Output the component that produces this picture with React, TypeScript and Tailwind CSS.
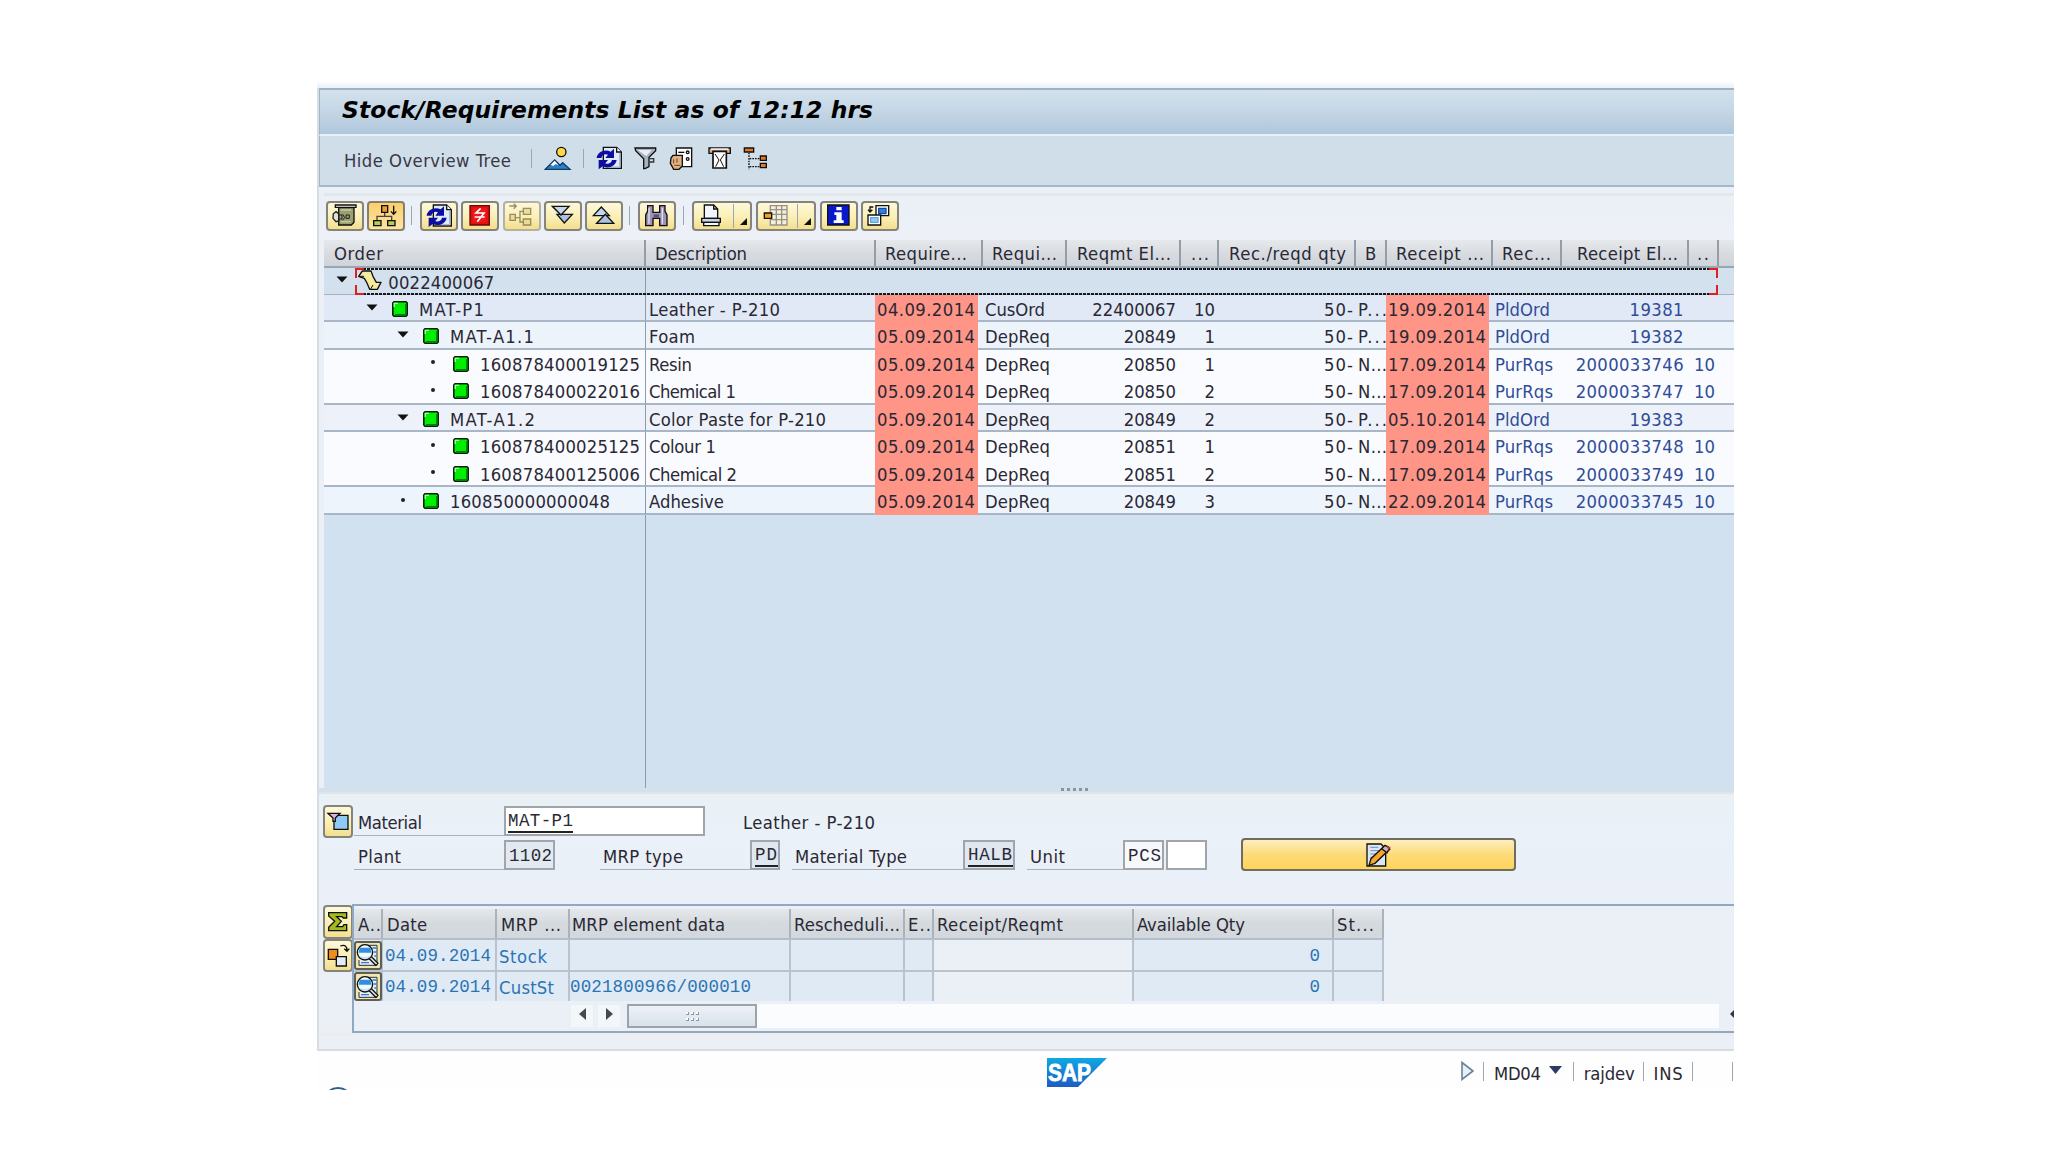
import { useLayoutEffect, useRef, type ReactNode } from "react";

/* Text run that spreads its letters to a given width. */
function T({ w, className = "", children }: { w?: number; className?: string; children: string }) {
  const ref = useRef<HTMLSpanElement>(null);
  useLayoutEffect(() => {
    const el = ref.current;
    if (!el || !w || children.length < 2) return;
    el.style.letterSpacing = "0px";
    const natural = el.getBoundingClientRect().width;
    el.style.letterSpacing = `${(w + 2 - natural) / (children.length - 1)}px`;
  }, [w, children]);
  return (
    <span ref={ref} className={`inline-block shrink-0 whitespace-pre ${className}`}>
      {children}
    </span>
  );
}

function Icon({ box, className = "", children }: { box: [number, number, number, number]; className?: string; children: ReactNode }) {
  return (
    <svg
      width={box[2] / 3}
      height={box[3] / 3}
      viewBox={box.join(" ")}
      className={`block shrink-0 ${className}`}
      fill="none"
      stroke="#101010"
      strokeWidth="4"
    >
      {children}
    </svg>
  );
}

const SyncArt = () => (
  <>
    <path d="M20 4H60L74 18V67H20Z" fill="#dfeafa" />
    <path d="M60 4V18H74" fill="#fff" />
    <path d="M69 22V63H26" stroke="#9fb0c8" strokeWidth="3" />
    <g stroke="none" fill="#0d0da0">
      <path d="M0 36C2 18 24 8 42 17L52 8V36H26L34 26C26 22 16 26 14 36Z" />
      <path d="M60 42C58 60 34 70 18 61L6 70V42H34L26 52C34 56 44 52 46 42Z" />
    </g>
  </>
);

const btnBase =
  "flex shrink-0 items-center justify-center rounded-[4px] border-2 bg-gradient-to-b from-[#fdf8da] via-[#fbf0b8] to-[#f3df8c]";
const btn = `${btnBase} h-[30px] w-[38px] border-[#85847c]`;
const wideBtn = `${btnBase} h-[30px] w-[60px] border-[#85847c]`;

const Sep = ({ className = "" }: { className?: string }) => (
  <div className={`w-[1px] shrink-0 bg-[#9aa8b5] ${className}`} />
);

const DownTri = () => (
  <svg width="12" height="7" viewBox="0 0 12 7" className="block shrink-0">
    <path d="M.5 .5H11.500L6 6.500Z" fill="#111" />
  </svg>
);

const Dropdown = () => (
  <svg width="7" height="7" viewBox="0 0 7 7" className="mt-2.5 block">
    <path d="M7 0V7H0Z" fill="#111" />
  </svg>
);

const GreenBox = () => (
  <svg width="16" height="16" viewBox="0 0 16 16" className="block shrink-0">
    <path d="M2 .8H14L15.2 2V14L14 15.200H2L.8 14V2Z" fill="#00ee00" stroke="#082008" strokeWidth="1.6" />
    <path d="M2.300 6V2.400H6" stroke="#a8ffa8" strokeWidth="1.4" fill="none" />
    <path d="M3 13.800H13.800V3" stroke="#067a10" strokeWidth="1.4" fill="none" />
  </svg>
);

const cols =
  "grid grid-cols-[322px_230px_107px_84px_114px_38px_137px_31px_106px_69px_127px_30px_15px]";

type Row = {
  id: string; w: number; level: number; leaf: boolean; bg: string; line: boolean; h: string;
  desc: string; dw: number; d1: string; type: string; num: string; item: string; b: string; d2: string; rec: string; el: string; ri: string;
};

const rows: Row[] = [
  { id: "MAT-P1", w: 63, level: 1, leaf: false, bg: "bg-[#e1e9f6]", line: true, h: "h-[27px]", desc: "Leather - P-210", dw: 129, d1: "04.09.2014", type: "CusOrd", num: "22400067", item: "10", b: "P...", d2: "19.09.2014", rec: "PldOrd", el: "19381", ri: "" },
  { id: "MAT-A1.1", w: 82, level: 2, leaf: false, bg: "bg-[#edf3fb]", line: true, h: "h-[28px]", desc: "Foam", dw: 44, d1: "05.09.2014", type: "DepReq", num: "20849", item: "1", b: "P...", d2: "19.09.2014", rec: "PldOrd", el: "19382", ri: "" },
  { id: "160878400019125", w: 158, level: 3, leaf: true, bg: "bg-[#f9fbfe]", line: false, h: "h-[27px]", desc: "Resin", dw: 41, d1: "05.09.2014", type: "DepReq", num: "20850", item: "1", b: "N...", d2: "17.09.2014", rec: "PurRqs", el: "2000033746", ri: "10" },
  { id: "160878400022016", w: 158, level: 3, leaf: true, bg: "bg-[#f9fbfe]", line: true, h: "h-[28px]", desc: "Chemical 1", dw: 85, d1: "05.09.2014", type: "DepReq", num: "20850", item: "2", b: "N...", d2: "17.09.2014", rec: "PurRqs", el: "2000033747", ri: "10" },
  { id: "MAT-A1.2", w: 83, level: 2, leaf: false, bg: "bg-[#edf2fa]", line: true, h: "h-[27px]", desc: "Color Paste for P-210", dw: 175, d1: "05.09.2014", type: "DepReq", num: "20849", item: "2", b: "P...", d2: "05.10.2014", rec: "PldOrd", el: "19383", ri: "" },
  { id: "160878400025125", w: 158, level: 3, leaf: true, bg: "bg-[#f9fbfe]", line: false, h: "h-[28px]", desc: "Colour 1", dw: 65, d1: "05.09.2014", type: "DepReq", num: "20851", item: "1", b: "N...", d2: "17.09.2014", rec: "PurRqs", el: "2000033748", ri: "10" },
  { id: "160878400125006", w: 158, level: 3, leaf: true, bg: "bg-[#f9fbfe]", line: true, h: "h-[27px]", desc: "Chemical 2", dw: 86, d1: "05.09.2014", type: "DepReq", num: "20851", item: "2", b: "N...", d2: "17.09.2014", rec: "PurRqs", el: "2000033749", ri: "10" },
  { id: "160850000000048", w: 158, level: 2, leaf: true, bg: "bg-[#eef4fc]", line: true, h: "h-[28px]", desc: "Adhesive", dw: 73, d1: "05.09.2014", type: "DepReq", num: "20849", item: "3", b: "N...", d2: "22.09.2014", rec: "PurRqs", el: "2000033745", ri: "10" },
];

const indent = ["", "pl-[42px]", "pl-[73px]", "pl-[103px]"];

const headers: [string, number, string][] = [
  ["Order", 47, "pl-[10px]"],
  ["Description", 90, "pl-[9px]"],
  ["Require...", 80, "pl-[9px]"],
  ["Requi...", 63, "pl-[9px]"],
  ["Reqmt El...", 92, "pl-[10px]"],
  ["...", 16, "pl-[10px]"],
  ["Rec./reqd qty", 115, "pl-[10px]"],
  ["B", 0, "pl-[9px]"],
  ["Receipt ...", 86, "pl-[9px]"],
  ["Rec...", 47, "pl-[9px]"],
  ["Receipt El...", 99, "pl-[15px]"],
  ["..", 10, "pl-[8px]"],
  ["", 0, ""],
];

function DateCell({ line, children }: { line: string; children: string }) {
  return (
    <div className="flex">
      <div className="-ml-px flex w-[103px] items-center bg-[#ff9587] pl-[2px] pt-[3px]"><T w={96}>{children}</T></div>
      <div className={`flex-1 ${line}`} />
    </div>
  );
}

function TreeRow({ r }: { r: Row }) {
  const line = r.line ? "border-b-2 border-[#a9b6c5]" : "";
  const cell = `flex items-center pt-[5px] ${r.line ? line : "pb-[2px]"}`;
  return (
    <div className={`${cols} ${r.h} ${r.bg}`}>
      <div className={`${cell} border-r border-r-[#8c9cae] ${indent[r.level]}`}>
        <div className="-mt-1.5 flex w-3 shrink-0 justify-center">
          {r.leaf ? <div className="size-[4px] rounded-full bg-[#222]" /> : <DownTri />}
        </div>
        <div className="-mt-[3px] ml-3.5"><GreenBox /></div>
        <T w={r.w} className="ml-[11px]">{r.id}</T>
      </div>
      <div className={`${cell} pl-[3px]`}><T w={r.dw}>{r.desc}</T></div>
      <DateCell line={line}>{r.d1}</DateCell>
      <div className={`${cell} pl-[2px]`}><T w={r.type === "CusOrd" ? 58 : 63}>{r.type}</T></div>
      <div className={`${cell} justify-end pr-[5px]`}><T>{r.num}</T></div>
      <div className={`${cell} justify-end pr-[4px]`}><T>{r.item}</T></div>
      <div className={`${cell} justify-end pr-[2px]`}><T w={27}>50-</T></div>
      <div className={`${cell} pl-[2px]`}><T w={27}>{r.b}</T></div>
      <DateCell line={line}>{r.d2}</DateCell>
      <div className={`${cell} pl-[2px] text-[#304c98]`}><T w={r.rec === "PldOrd" ? 53 : 56}>{r.rec}</T></div>
      <div className={`${cell} justify-end pr-[5px] text-[#304c98]`}><T w={r.el.length > 5 ? 106 : 52}>{r.el}</T></div>
      <div className={`${cell} pl-[5px] text-[#304c98]`}><T>{r.ri}</T></div>
      <div className={cell} />
    </div>
  );
}

function Field({ label, w, className }: { label: string; w: number; className: string }) {
  return (
    <div className={`flex h-[30px] shrink-0 items-center border-b border-[#a9b0b8] pt-[5px] ${className}`}>
      <T w={w}>{label}</T>
    </div>
  );
}

const input = "flex h-[30px] shrink-0 items-center border-2 border-[#a0a5ac] pt-[4px] font-['Liberation_Mono',monospace] text-[17.5px]";

const gridCols = "grid grid-cols-[29px_114px_73px_221px_114px_29px_200px_200px_50px]";

const Magnifier = () => (
  <div className="flex h-[29px] w-[28px] items-center justify-center rounded-[3px] border-2 border-[#5e5e58] bg-[#efe6b0]">
    <Icon box={[138, 518, 74, 78]}>
      <path d="M160 528H204V588H150V572" fill="#e8edf2" stroke="#2c3038" strokeWidth="3" />
      <path d="M190 536H202M194 548H202M196 560H202M156 580H180" stroke="#2b7fd0" />
      <circle cx="168" cy="549" r="23" fill="#f4f9ff" />
      <path d="M152 535H184L188 550H149Z" fill="#2f8fe0" stroke="none" />
      <path d="M152 562C160 568 174 568 182 562" stroke="#9fc8ec" strokeWidth="3" />
      <path d="M184 565L205 586" strokeWidth="13" />
      <path d="M185 566L203 584" stroke="#e2e8ec" strokeWidth="5" />
    </Icon>
  </div>
);

const bottomHeaders: [string, number, string][] = [
  ["A..", 21, "pl-[4px]"],
  ["Date", 38, "pl-[4px]"],
  ["MRP ...", 58, "pl-[4px]"],
  ["MRP element data", 151, "pl-[2px]"],
  ["Rescheduli...", 104, "pl-[3px]"],
  ["E..", 21, "pl-[3px]"],
  ["Receipt/Reqmt", 124, "pl-[3px]"],
  ["Available Qty", 106, "pl-[3px]"],
  ["St...", 35, "pl-[3px]"],
];

function StockRow({ type, w, data, h }: { type: string; w: number; data: string; h: string }) {
  const c = "flex items-center border-r-2 border-[#b9c3cd] bg-[#e0eaf4]";
  const mono = "pt-[3px] font-['Liberation_Mono',monospace] text-[17.5px]";
  return (
    <div className={`${gridCols} ${h} border-[#b9c3cd] text-[#2b74b4]`}>
      <div className={`${c} justify-center`}><Magnifier /></div>
      <div className={`${c} pl-[2px] ${mono}`}><T w={104}>04.09.2014</T></div>
      <div className={`${c} pl-[2px] pt-[4px]`}><T w={w}>{type}</T></div>
      <div className={`${c} ${mono}`}><T w={179}>{data}</T></div>
      <div className={c} />
      <div className={c} />
      <div className="flex items-center border-r-2 border-[#b9c3cd] bg-[#ebf0f7]" />
      <div className={`${c} justify-end pr-[12px] ${mono}`}><T>0</T></div>
      <div className={c} />
    </div>
  );
}

const dash =
  "h-[2px] bg-[repeating-linear-gradient(90deg,#15181c_0_3px,transparent_3px_4px)]";

export default function App() {
  return (
    <div className="h-[1170px] w-[2048px] overflow-hidden bg-white pl-[317px] pt-[81px] font-['DejaVu_Sans_Condensed','DejaVu_Sans',sans-serif] text-[18.3px] leading-none text-[#2a2834] [font-stretch:condensed]">
      <div className="w-[1417px] overflow-hidden">
        <div className="h-[7px] bg-gradient-to-b from-white to-[#e9f0f6]" />
        <div className="h-[963px] border-b-2 border-l-2 border-[#d8dde2] bg-[#ebf0f7]">
          {/* title bar */}
          <div className="flex h-[48px] items-center border-b-2 border-l border-t-2 border-b-[#e6f1f9] border-l-[#9fb6ca] border-t-[#9db3c6] bg-gradient-to-b from-[#d2e1ec] via-[#c4d6e5] to-[#afc7db] pl-[22px]">
            <T w={529} className="-mt-[3px] font-['DejaVu_Sans',sans-serif] text-[23.4px] font-bold italic text-black [font-stretch:normal]">
              Stock/Requirements List as of 12:12 hrs
            </T>
          </div>
          {/* application toolbar */}
          <div className="flex h-[51px] items-start border-b-2 border-l border-[#a3b7cb] bg-[#d0deea] pt-[10px]">
            <T w={165} className="ml-[24px] mt-[6px] text-[#3a3744]">Hide Overview Tree</T>
            <Sep className="ml-[20px] mt-[3px] h-[19px]" />
            <Icon box={[702, 198, 82, 76]} className="ml-[12px]">
              <circle cx="754" cy="216" r="14" fill="#ffd84a" />
              <path d="M706 268L734 240L750 256L758 248L780 268Z" fill="#2f80c8" stroke="#123a66" />
              <path d="M722 254L734 242L746 256L736 252L730 258Z" fill="#fff" stroke="none" />
            </Icon>
            <Sep className="ml-[11px] mt-[3px] h-[19px]" />
            <Icon box={[-2, 0, 82, 76]} className="ml-[12px]"><SyncArt /></Icon>
            <Icon box={[970, 198, 78, 76]} className="ml-[10px]">
              <path d="M976 204H1038V212L1018 232V260L1006 266H1002V236L978 212Z" fill="#a8b2be" />
              <path d="M984 210H1026L1010 228Z" fill="#e8eef4" stroke="none" />
              <path d="M1020 236H1032V246H1020" stroke="#333" />
            </Icon>
            <Icon box={[1078, 198, 76, 76]} className="ml-[10px]">
              <path d="M1100 204H1146V260H1100Z" fill="#fff" />
              <circle cx="1134" cy="217" r="4" /><circle cx="1134" cy="237" r="4" />
              <path d="M1106 217H1124" />
              <path d="M1084 234L1090 226H1118V258L1108 268H1092L1082 250Z" fill="#e0b080" />
              <path d="M1092 238V250M1102 236V248M1094 256H1112" stroke="#6b4320" strokeWidth="3" />
            </Icon>
            <Icon box={[1192, 198, 78, 76]} className="ml-[13px]">
              <path d="M1198 204H1262V220H1198Z" fill="#d8b090" />
              <path d="M1204 207H1256" stroke="#fff" />
              <path d="M1210 214H1250V264H1210Z" fill="#fff" strokeWidth="5" />
              <path d="M1216 222L1228 240L1218 260M1244 222L1232 240L1242 260" strokeWidth="3" />
            </Icon>
            <Icon box={[1298, 198, 76, 76]} className="ml-[10px]">
              <path d="M1302 204H1330V216H1302Z" fill="#e8781c" />
              <path d="M1316 218V268" strokeDasharray="5 3" />
              <path d="M1318 236H1348M1318 260H1348" strokeDasharray="5 3" />
              <path d="M1350 228H1368V241H1350ZM1350 250H1368V263H1350Z" fill="#e8781c" />
            </Icon>
          </div>
          {/* overview tree toolbar */}
          <div className="h-[53px] bg-gradient-to-b from-[#eaf0f6] to-[#edf1f7] pl-[5px] pt-[6px]">
            <div className="h-[3px] bg-[#e2e7ec]" />
            <div className="flex pl-[2px] pt-[5px]">
              <div className={btn}>
                <Icon box={[63, 368, 82, 76]}>
                  <path d="M86 382H132V426L124 434H86Z" fill="#9a9f70" />
                  <path d="M76 374H138V381H76Z" fill="#f8f8f0" />
                  <path d="M92 389H124M92 424H122" stroke="#c9cca0" />
                  <path d="M70 400L78 394L86 400V422L78 424L69 414Z" fill="#e0e0d8" stroke="#222" />
                  <path d="M86 404H96V416H86M98 402L104 412L98 420M108 404H118V414H108Z" stroke="#222" strokeWidth="3" />
                </Icon>
              </div>
              <div className="ml-[3px] flex h-[30px] w-[38px] shrink-0 items-center justify-center rounded-[4px] border-2 border-[#85806c] bg-gradient-to-b from-[#fbcf6c] to-[#fde4a0]">
                <Icon box={[187, 368, 82, 76]}>
                  <path d="M216 376H234V396H216Z" fill="#f0a030" />
                  <path d="M225 398V408M202 420V408H246V420" stroke="#444" />
                  <path d="M192 421H214V436H192ZM234 421H256V436H234Z" fill="#b8cc50" />
                  <path d="M252 376V400M244 393L252 402L260 393" />
                </Icon>
              </div>
              <Sep className="ml-[6px] mt-[5px] h-[19px]" />
              <div className={`${btn} ml-[8px]`}><Icon box={[-2, -2, 80, 76]}><SyncArt /></Icon></div>
              <div className={`${btn} ml-[3px]`}>
                <Icon box={[468, 368, 82, 76]}>
                  <path d="M480 376H538V434H480Z" fill="#e01010" stroke="#6e0606" />
                  <path d="M488 384H530V426H488Z" fill="#f01818" stroke="none" />
                  <path d="M512 384L498 398H522L502 424M494 410H524" stroke="#fff" strokeWidth="5" />
                </Icon>
              </div>
              <div className={`${btnBase} ml-[4px] h-[30px] w-[38px] border-[#b3b1a0]`}>
                <Icon box={[594, 368, 82, 76]} className="opacity-70">
                  <path d="M600 402H616V420H600ZM640 384H662V402H640ZM640 416H662V434H640Z" fill="#e6d48a" stroke="#6c6440" />
                  <path d="M618 412H630M640 393H630V425H640M598 377H618M611 370L619 377L611 385" stroke="#6c6440" />
                </Icon>
              </div>
              <div className={`${btn} ml-[3px]`}>
                <Icon box={[716, 368, 82, 76]}>
                  <path d="M740 402H786L762 428Z" fill="#a9c2e6" />
                  <path d="M726 378H776L752 404Z" fill="#c5d6ee" />
                </Icon>
              </div>
              <div className={`${btn} ml-[3px]`}>
                <Icon box={[840, 368, 82, 76]}>
                  <path d="M850 406L874 380L898 406Z" fill="#c5d6ee" />
                  <path d="M860 429L886 402L911 429Z" fill="#a9c2e6" />
                </Icon>
              </div>
              <Sep className="ml-[6px] mt-[5px] h-[19px]" />
              <div className={`${btn} ml-[8px]`}>
                <Icon box={[996, 368, 82, 76]}>
                  <path d="M1010 376H1026V396H1046V376H1062V392L1068 404V436H1046V414H1026V436H1004V404L1010 392Z" fill="#9d95b8" />
                  <path d="M1014 382V430M1054 382V430" stroke="#e4e0f0" />
                  <path d="M1028 402H1044V412H1028Z" fill="#5c5478" stroke="none" />
                </Icon>
              </div>
              <Sep className="ml-[7px] mt-[5px] h-[19px]" />
              <div className={`${wideBtn} ml-[8px]`}>
                <Icon box={[1161, 368, 75, 76]} className="ml-px">
                  <path d="M1180 374H1208L1220 386V414H1180Z" fill="#f2f6fc" />
                  <path d="M1208 374V386H1220" />
                  <path d="M1172 414H1228V426H1172Z" fill="#c8d4e8" /><path d="M1178 426H1224V436H1178Z" fill="#f8f8f8" />
                </Icon>
                <Sep className="ml-[10px] h-[24px]" />
                <div className="ml-[6px]"><Dropdown /></div>
              </div>
              <div className={`${wideBtn} ml-[4px]`}>
                <Icon box={[364, 38, 76, 76]} className="ml-[2px]">
                  <path d="M386 46H436V104H386ZM386 58H436M386 72H436M386 88H436M404 46V104M420 46V104" fill="#f3efd8" stroke="#96928a" strokeWidth="4" />
                  <path d="M368 68H390V84H368Z" fill="#f0a028" />
                </Icon>
                <Sep className="ml-[9px] h-[24px]" />
                <div className="ml-[6px]"><Dropdown /></div>
              </div>
              <div className={`${btn} ml-[4px]`}>
                <Icon box={[555, 38, 78, 76]}>
                  <path d="M560 44H624V104H560Z" fill="#0a18cc" />
                  <path d="M586 50H602V60H586ZM580 66H602V90H608V98H578V90H586V74H580Z" fill="#fff" stroke="none" />
                </Icon>
              </div>
              <div className={`${btn} ml-[3px]`}>
                <Icon box={[678, 38, 82, 76]}>
                  <path d="M708 46H746V76H708Z" fill="#fff" />
                  <path d="M716 54H738V70H716Z" fill="#2f7fe0" stroke="#1848a0" />
                  <path d="M684 74H722V104H684Z" fill="#fff" />
                  <path d="M692 82H714V96H692Z" fill="#8ecbf4" stroke="#60a8e0" />
                  <path d="M700 50H690V64M684 58L690 65L697 58" />
                </Icon>
              </div>
            </div>
          </div>
          {/* overview tree */}
          <div className="ml-[5px] h-[548px] bg-[#d2e1ef]">
            <div className={`${cols} h-[28px] border-b-2 border-[#9aa6b2] bg-gradient-to-b from-[#e6e9ec] via-[#d8dce1] to-[#cfd4da]`}>
              {headers.map(([t, w, p], i) => (
                <div key={i} className={`flex items-center border-[#959da8] pt-[2px] ${p} ${i < 12 ? "border-r-2" : ""}`}>
                  {t && <T w={w}>{t}</T>}
                </div>
              ))}
            </div>
            <div className={`${cols} relative h-[27px] border-b border-[#a3b1c1] bg-[#d3e1ee]`}>
              <div className="flex items-center border-r border-[#8c9cae] pl-[12px]">
                <div className="-mt-1"><DownTri /></div>
                <Icon box={[142, 240, 76, 72]} className="ml-[9px]">
                  <path d="M147 262L158 246H184L190 262L200 280H214L203 301H180L172 282L164 268Z" fill="#f6eca0" strokeLinejoin="round" />
                  <path d="M149 262H163M183 300L190 288" strokeWidth="3" />
                </Icon>
                <T w={104} className="ml-[6px] mt-[4px]">0022400067</T>
              </div>
              <div className="absolute left-[31px] top-0 flex h-[27px] w-[1363px] flex-col justify-between">
                <div className={dash} />
                <div className={dash} />
                <div className="absolute left-0 top-0 h-[10px] w-[9px] border-l-2 border-t-2 border-[#e02020]" />
                <div className="absolute bottom-0 left-0 h-[10px] w-[9px] border-b-2 border-l-2 border-[#e02020]" />
                <div className="absolute right-0 top-0 h-[10px] w-[9px] border-r-2 border-t-2 border-[#e02020]" />
                <div className="absolute bottom-0 right-0 h-[10px] w-[9px] border-b-2 border-r-2 border-[#e02020]" />
              </div>
            </div>
            {rows.map((r) => <TreeRow key={r.id} r={r} />)}
            <div className="h-[273px] w-[322px] border-r border-[#8c9cae]" />
          </div>
          {/* splitter */}
          <div className="flex h-[6px] justify-center gap-[3px] border-b-2 border-[#dbe6e8] bg-[#d4e0ec] pl-[95px]">
            {[0, 1, 2, 3, 4].map((i) => <div key={i} className="size-[3px] bg-[#8a959f]" />)}
          </div>
          {/* material form */}
          <div className="flex h-[110px] bg-gradient-to-b from-[#e9f1f7] to-[#ebf0f8] pl-[4px] pt-[11px]">
            <div className={`${btnBase} h-[33px] w-[30px] border-[#85847c]`}>
              <Icon box={[46, 120, 74, 72]}>
                <path d="M70 136H112V178H70Z" fill="#8fcaf6" />
                <path d="M52 130H88L74 144V154H67V144Z" fill="#d8b8d8" />
              </Icon>
            </div>
            <div className="ml-[1px]">
              <div className="flex pt-px">
                <Field label="Material" w={62} className="w-[150px] pl-[4px]" />
                <div className={`${input} w-[201px] bg-white pl-[2px]`}><T w={63} className="border-b-2 border-[#222]">MAT-P1</T></div>
                <T w={130} className="ml-[38px] mt-[8px]">Leather - P-210</T>
              </div>
              <div className="mt-[4px] flex">
                <Field label="Plant" w={41} className="w-[150px] pl-[4px]" />
                <div className={`${input} w-[51px] bg-[#e2e9f1] pl-[3px]`}><T w={41}>1102</T></div>
                <Field label="MRP type" w={78} className="ml-[45px] w-[150px] pl-[3px]" />
                <div className={`${input} w-[30px] bg-[#dfe7f0] pl-[3px]`}><T w={20} className="border-b-2 border-[#222]">PD</T></div>
                <Field label="Material Type" w={110} className="ml-[12px] w-[171px] pl-[3px]" />
                <div className={`${input} w-[52px] bg-[#dfe7f0] pl-[3px]`}><T w={42} className="border-b-2 border-[#222]">HALB</T></div>
                <Field label="Unit" w={33} className="ml-[12px] w-[96px] pl-[3px]" />
                <div className={`${input} w-[41px] bg-[#f6f8fb] pl-[3px]`}><T w={31}>PCS</T></div>
                <div className={`${input} ml-[2px] w-[41px] bg-white`} />
                <div className="-mt-[2px] ml-[34px] flex h-[33px] w-[275px] items-center justify-center rounded-[4px] border-2 border-[#6f6c62] bg-gradient-to-b from-[#fdeebc] via-[#fddb78] to-[#ffd458]">
                  <Icon box={[434, 214, 82, 78]}>
                    <path d="M440 220H482L496 234V286H440Z" fill="#dbe6f3" />
                    <path d="M450 230H474M450 240H480M450 250H470M450 260H462" stroke="#6d8dba" strokeWidth="3" />
                    <path d="M446 284L452 264L492 226L508 236L464 278Z" fill="#f6a628" />
                    <path d="M484 234L494 224L508 232L500 246Z" fill="#c9b6c4" />
                    <path d="M500 224L510 230L504 240Z" fill="#d03030" stroke="none" />
                  </Icon>
                </div>
              </div>
            </div>
          </div>
          {/* stock overview */}
          <div className="flex pl-[4px]">
            <div className="w-[29px] pt-px">
              <div className={`${btnBase} h-[34px] w-[30px] border-[#85847c]`}>
                <Icon box={[46, 418, 70, 70]}>
                  <path d="M54 426H108V442H98L94 438H78L92 452L78 468H96L100 462H108V480H54V470L72 452L54 436Z" fill="#a3bb1c" />
                </Icon>
              </div>
              <div className={`${btnBase} h-[33px] w-[30px] border-[#85847c]`}>
                <Icon box={[47, 520, 74, 72]}>
                  <path d="M54 536H82V566H54Z" fill="#f08c1c" />
                  <path d="M78 558H108V586H78Z" fill="#e3ebf6" />
                  <path d="M90 526C104 520 110 528 110 540M102 534L110 542L117 534" />
                </Icon>
              </div>
            </div>
            <div className="h-[129px] flex-1 border-2 border-r-0 border-[#8fa9c2] bg-[#ebf0f7] pt-[3px]">
              <div className="w-[1030px]">
                <div className={`${gridCols} h-[31px] border-b-2 border-[#b5bec8] bg-gradient-to-b from-[#e5e8eb] via-[#d5dade] to-[#d3d8de]`}>
                  {bottomHeaders.map(([t, w, p], i) => (
                    <div key={i} className={`flex items-center overflow-hidden border-r-2 border-[#aab2bb] pt-[3px] ${p}`}><T w={w}>{t}</T></div>
                  ))}
                </div>
                <StockRow type="Stock" w={46} data="" h="h-[32px] border-b-2" />
                <StockRow type="CustSt" w={53} data="0021800966/000010" h="h-[29px]" />
              </div>
              <div className="mt-[3px] flex h-[24px] items-center pl-[217px]">
                <div className="flex h-[22px] w-[22px] items-center justify-center bg-[#f4f7fa]">
                  <svg width="7" height="12" viewBox="0 0 7 12" className="-mt-1"><path d="M7 0V12L0 6Z" fill="#444a52" /></svg>
                </div>
                <div className="ml-[5px] flex h-[22px] w-[22px] items-center justify-center bg-[#f4f7fa]">
                  <svg width="7" height="12" viewBox="0 0 7 12" className="-mt-1"><path d="M0 0V12L7 6Z" fill="#444a52" /></svg>
                </div>
                <div className="ml-[7px] flex h-[24px] w-[130px] items-center justify-center border-2 border-[#9ba4ae] bg-gradient-to-b from-[#edf2f7] to-[#d9e1ea]">
                  <div className="grid grid-cols-3 gap-x-[2px] gap-y-[3px]">
                    {[0, 1, 2, 3, 4, 5].map((i) => <div key={i} className="size-[3px] border-b border-r border-[#8d97a2] bg-white" />)}
                  </div>
                </div>
                <div className="h-[24px] w-[962px] bg-[#fbfcfd]" />
                <svg width="5" height="10" viewBox="0 0 5 10" className="-mt-1 ml-[11px]"><path d="M5 0V10L0 5Z" fill="#33373d" /></svg>
              </div>
            </div>
          </div>
          <div className="h-[3px] bg-[#ededed]" />
        </div>
        {/* status bar */}
        <div className="relative flex h-[39px] items-start overflow-hidden bg-[#fefefe]">
          <div className="absolute left-[8px] top-[36px] h-[20px] w-[26px] rounded-[50%] border-2 border-[#2f5f8c]" />
          <svg width="60" height="29" viewBox="0 0 60 29" className="ml-[730px] mt-[7px] block shrink-0">
            <defs>
              <linearGradient id="sap" x1="0" y1="0" x2="0" y2="1">
                <stop offset="0" stopColor="#10a8e4" />
                <stop offset="1" stopColor="#1c5cc0" />
              </linearGradient>
            </defs>
            <path d="M0 0H60L31 29H0Z" fill="url(#sap)" />
            <text x="1" y="23" textLength="43" lengthAdjust="spacingAndGlyphs" fontFamily="Liberation Sans" fontWeight="bold" fontSize="24" fill="#fff" stroke="#fff" strokeWidth=".8">SAP</text>
          </svg>
          <svg width="13" height="20" viewBox="0 0 13 20" className="ml-[354px] mt-[10px] block shrink-0">
            <path d="M1 1.5L12 10L1 18.500Z" fill="#e7f0f7" stroke="#6d8294" strokeWidth="1.6" />
          </svg>
          <Sep className="ml-[9px] mt-[11px] h-[19px]" />
          <T w={45} className="ml-[10px] mt-[14px]">MD04</T>
          <svg width="13" height="8" viewBox="0 0 13 8" className="ml-[8px] mt-[15px] block shrink-0"><path d="M0 0H13L6.500 8Z" fill="#2d3a68" /></svg>
          <Sep className="ml-[11px] mt-[11px] h-[19px]" />
          <T w={49} className="ml-[10px] mt-[14px]">rajdev</T>
          <Sep className="ml-[8px] mt-[11px] h-[19px]" />
          <T w={27} className="ml-[10px] mt-[14px]">INS</T>
          <Sep className="ml-[9px] mt-[11px] h-[19px]" />
          <Sep className="ml-[39px] mt-[11px] h-[19px]" />
        </div>
      </div>
    </div>
  );
}
